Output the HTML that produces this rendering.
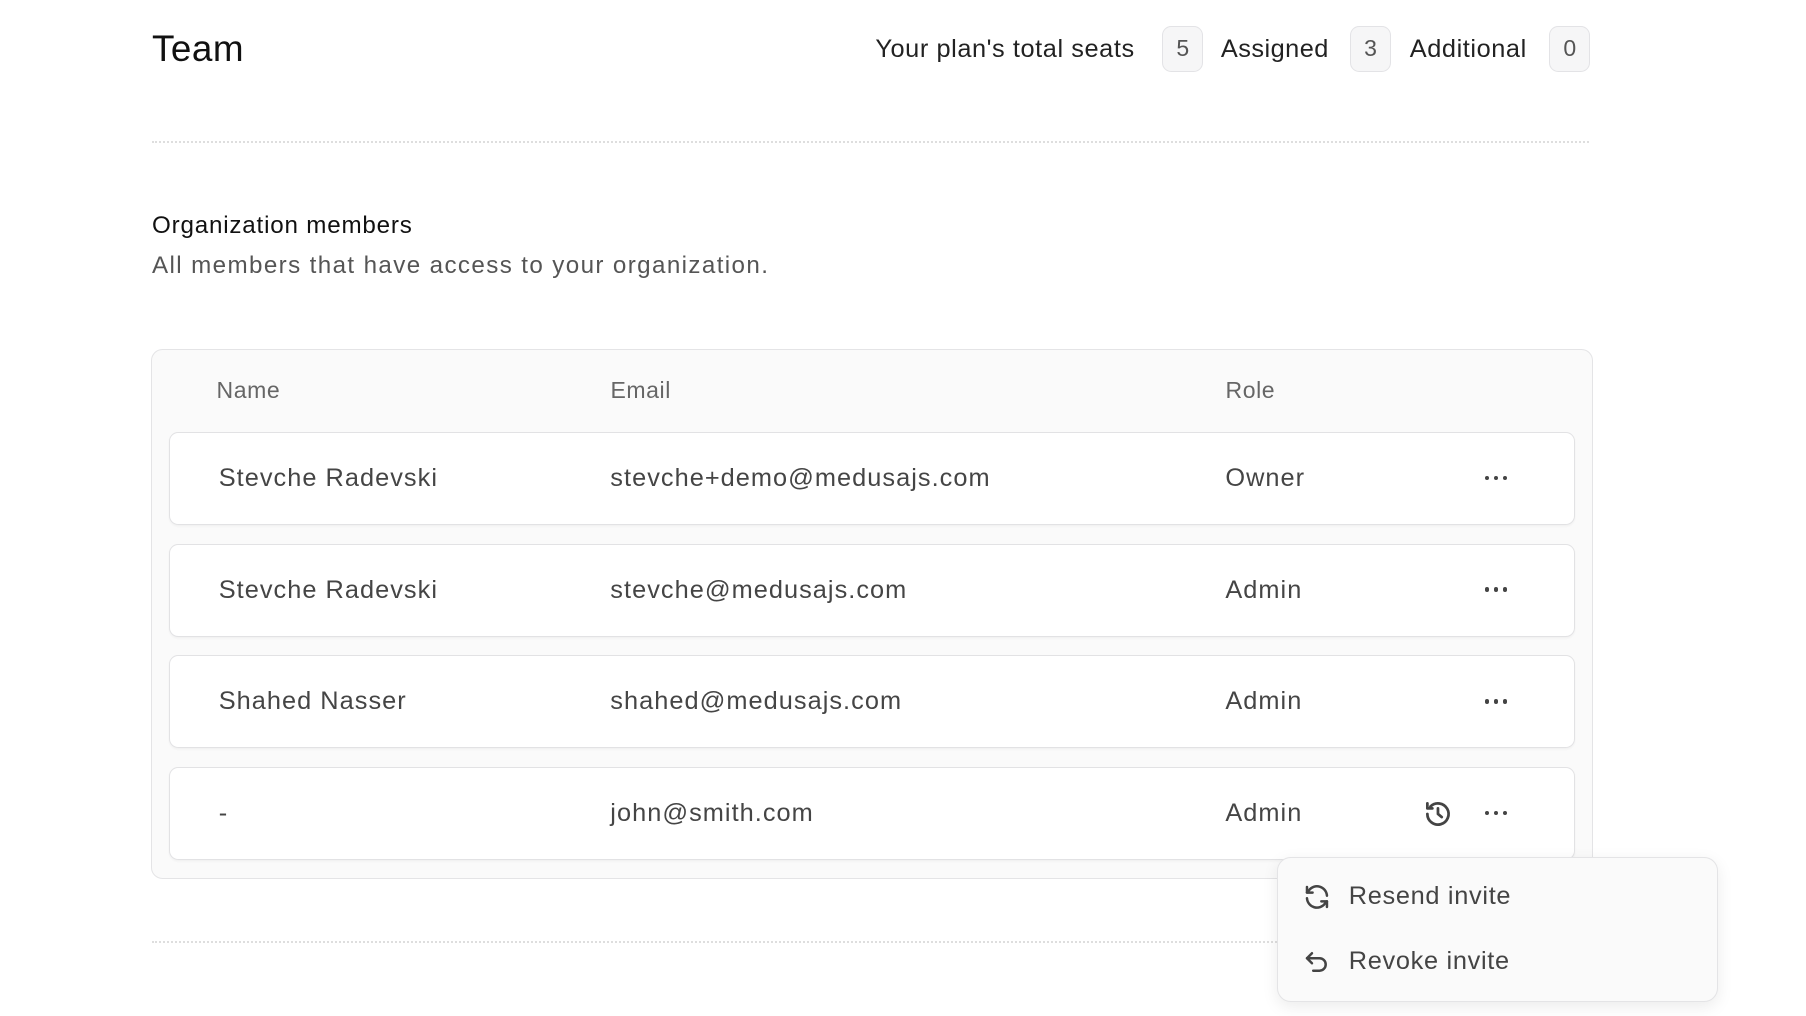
<!DOCTYPE html>
<html><head><style>
html,body{margin:0;padding:0;background:#fff;overflow:hidden}
#w{width:1568px;height:882px;position:relative;zoom:1.1518;font-family:"Liberation Sans",sans-serif;color:#1a1a1a}
.a{position:absolute;white-space:nowrap}
.badge{position:absolute;top:23px;height:38px;width:34px;border:1px solid #e3e3e6;background:#f6f6f7;border-radius:8px;text-align:center;line-height:38px;font-size:20px;color:#555}
.dot{position:absolute;left:132px;width:1248px;border-top:2px dotted #dedede}
.row{position:absolute;left:147px;width:1219px;height:79px;background:#fff;border:1px solid #e2e2e4;border-radius:8px;box-shadow:0 1px 2px rgba(0,0,0,.04)}
.row span{position:absolute;top:27px;font-size:22px;color:#454545;letter-spacing:.9px}
.more{position:absolute;left:1141px;top:37px;display:flex;gap:4px}
.more i{display:block;width:4px;height:4px;border-radius:2px;background:#444}
</style></head><body><div id="w">
<div class="a" style="left:132px;top:24px;font-size:32px;font-weight:500;color:#111;letter-spacing:.4px">Team</div>
<div class="a" style="left:760px;top:30px;font-size:22px;color:#222;letter-spacing:.5px">Your plan's total seats</div>
<div class="badge" style="left:1009px">5</div>
<div class="a" style="left:1060px;top:30px;font-size:22px;color:#222;letter-spacing:.4px">Assigned</div>
<div class="badge" style="left:1172px">3</div>
<div class="a" style="left:1224px;top:30px;font-size:22px;color:#222;letter-spacing:.5px">Additional</div>
<div class="badge" style="left:1345px">0</div>
<div class="dot" style="top:122px"></div>
<div class="a" style="left:132px;top:184px;font-size:21px;font-weight:500;color:#111;letter-spacing:.7px">Organization members</div>
<div class="a" style="left:132px;top:219px;font-size:21px;color:#555;letter-spacing:1.2px">All members that have access to your organization.</div>
<div class="a" style="left:131px;top:303px;width:1250px;height:458px;background:#fafafa;border:1px solid #e4e4e6;border-radius:10px"></div>
<div class="a" style="left:188px;top:327px;font-size:20px;color:#666;letter-spacing:.5px">Name</div>
<div class="a" style="left:530px;top:327px;font-size:20px;color:#666;letter-spacing:.5px">Email</div>
<div class="a" style="left:1064px;top:327px;font-size:20px;color:#666;letter-spacing:.5px">Role</div>

<div class="row" style="top:375px"><span style="left:42px">Stevche Radevski</span><span style="left:382px">stevche+demo@medusajs.com</span><span style="left:916px">Owner</span><div class="more"><i></i><i></i><i></i></div></div>
<div class="row" style="top:472px"><span style="left:42px">Stevche Radevski</span><span style="left:382px">stevche@medusajs.com</span><span style="left:916px">Admin</span><div class="more"><i></i><i></i><i></i></div></div>
<div class="row" style="top:569px"><span style="left:42px">Shahed Nasser</span><span style="left:382px">shahed@medusajs.com</span><span style="left:916px">Admin</span><div class="more"><i></i><i></i><i></i></div></div>
<div class="row" style="top:666px"><span style="left:42px">-</span><span style="left:382px">john@smith.com</span><span style="left:916px">Admin</span>
<svg style="position:absolute;left:1088px;top:27px" width="26" height="26" viewBox="0 0 24 24" fill="none" stroke="#444" stroke-width="2.2" stroke-linecap="round" stroke-linejoin="round"><path d="M3.5 12a8.5 8.5 0 1 0 2.5-6"/><path d="M3.5 3.5v4h4"/><path d="M12 7.5V12l3 2.5"/></svg>
<div class="more"><i></i><i></i><i></i></div></div>

<div class="dot" style="top:817px;width:980px"></div>
<div class="a" style="left:1109px;top:744px;width:381px;height:124px;background:#fafafa;border:1px solid #e4e4e6;border-radius:12px;box-shadow:0 4px 14px rgba(0,0,0,.08)"></div>
<svg class="a" style="left:1130px;top:766px" width="26" height="26" viewBox="0 0 24 24" fill="none" stroke="#444" stroke-width="2" stroke-linecap="round" stroke-linejoin="round"><path d="M20 11a8 8 0 0 0-14.5-4.2L4 8.5"/><path d="M4 4v4.5h4.5"/><path d="M4 13a8 8 0 0 0 14.5 4.2L20 15.5"/><path d="M20 20v-4.5h-4.5"/></svg>
<div class="a" style="left:1171px;top:766px;font-size:22px;color:#444;letter-spacing:.6px">Resend invite</div>
<svg class="a" style="left:1130px;top:822px" width="26" height="26" viewBox="0 0 24 24" fill="none" stroke="#444" stroke-width="2" stroke-linecap="round" stroke-linejoin="round"><path d="M8 5L4 9l4 4"/><path d="M4 9h10a5 5 0 0 1 0 10H9"/></svg>
<div class="a" style="left:1171px;top:822px;font-size:22px;color:#444;letter-spacing:.6px">Revoke invite</div>
</div></body></html>
